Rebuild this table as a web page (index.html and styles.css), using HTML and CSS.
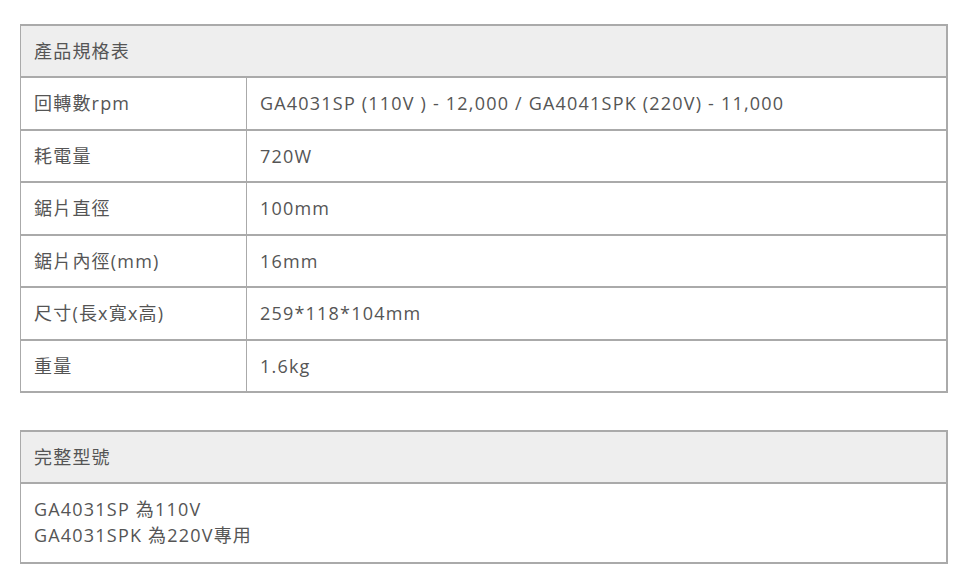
FILE: index.html
```html
<!DOCTYPE html>
<html lang="zh-Hant">
<head>
<meta charset="utf-8">
<title>產品規格表</title>
<link rel="stylesheet" href="styles.css">
</head>
<body>
<table class="spec">
  <colgroup><col class="col-label"><col class="col-value"></colgroup>
  <thead>
    <tr><th colspan="2">產品規格表</th></tr>
  </thead>
  <tbody>
    <tr><td class="label">回轉數rpm</td><td>GA4031SP (110V ) - 12,000 / GA4041SPK (220V) - 11,000</td></tr>
    <tr><td class="label">耗電量</td><td>720W</td></tr>
    <tr><td class="label">鋸片直徑</td><td>100mm</td></tr>
    <tr><td class="label">鋸片內徑(mm)</td><td>16mm</td></tr>
    <tr><td class="label">尺寸(長x寬x高)</td><td>259*118*104mm</td></tr>
    <tr><td class="label">重量</td><td>1.6kg</td></tr>
  </tbody>
</table>
<table class="spec models">
  <thead>
    <tr><th>完整型號</th></tr>
  </thead>
  <tbody>
    <tr><td class="multi">GA4031SP 為110V<br>GA4031SPK 為220V專用</td></tr>
  </tbody>
</table>
</body>
</html>
```
FILE: styles.css
```css
html, body {
  margin: 0;
  padding: 0;
  background: #fff;
}
body {
  padding: 24px 20px 0 20px;
  font-family: "Open Sans", "Noto Sans CJK TC", sans-serif;
  font-size: 18px;
  letter-spacing: 1.2px;
  color: #555;
}
.spec {
  width: 928px;
  border-collapse: collapse;
  table-layout: fixed;
  border-top: 2px solid #aaa;
  border-right: 2px solid #aaa;
  border-left: 1px solid #aaa;
  border-bottom: 2px solid #aaa;
}
.col-label {
  width: 226px;
}
.spec th,
.spec td {
  padding: 0 13px;
  text-align: left;
  font-weight: normal;
  line-height: 24px;
  border-bottom: 2px solid #aaa;
  vertical-align: middle;
  box-sizing: border-box;
}
.spec th {
  background: #eee;
  height: 52px;
}
.spec tr td {
  height: 52.5px;
}
.spec .label {
  border-right: 1px solid #aaa;
}
.spec tbody tr:last-child td {
  border-bottom: none;
}
.models {
  margin-top: 37px;
}
.models td.multi {
  height: auto;
  padding: 12px 13px 14px 13px;
  line-height: 26px;
}
```
